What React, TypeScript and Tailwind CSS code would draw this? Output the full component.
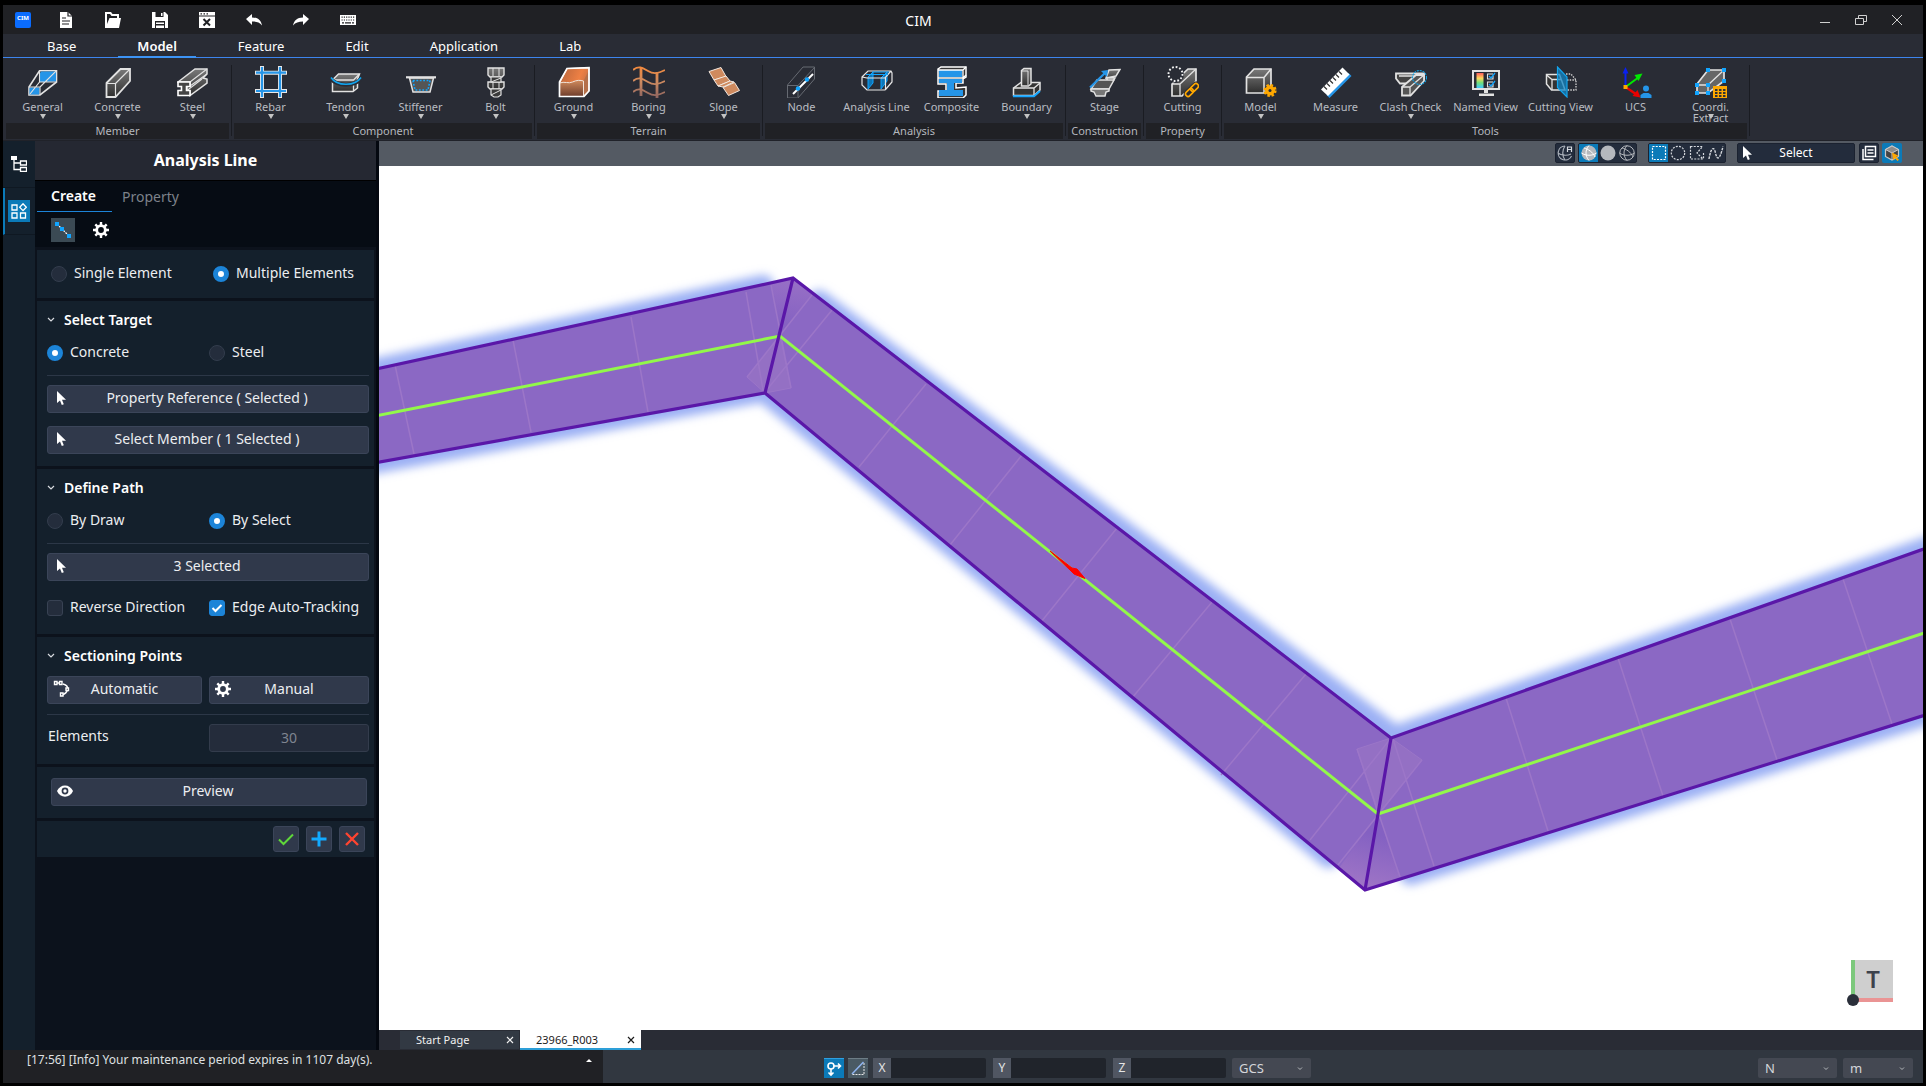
import type { ReactNode } from 'react'
import clsx from 'clsx'

/* ---------- ribbon icons, all on a 32px grid ---------- */

const DARK = 'url(#steel)'
const EDGE = '#e2e2e2'

function Icon32({ children }: { children: ReactNode }) {
  return (
    <svg viewBox="0 0 32 32" className="size-8" fill="none" strokeLinejoin="miter" aria-hidden="true">
      {children}
    </svg>
  )
}

// Gradients shared by every ribbon icon.
function SharedDefs() {
  return (
    <svg className="absolute size-0" aria-hidden="true">
      <defs>
        <linearGradient id="steel" x1="0" y1="0" x2="0" y2="1">
          <stop offset="0" stopColor="#7a7a7a" />
          <stop offset="1" stopColor="#2e2e2e" />
        </linearGradient>
        <linearGradient id="soilTop" x1="0" y1="0" x2="1" y2="0.4">
          <stop offset="0" stopColor="#b5643c" />
          <stop offset="0.7" stopColor="#ee8044" />
          <stop offset="1" stopColor="#c97246" />
        </linearGradient>
        <linearGradient id="soilFront" x1="0" y1="0" x2="0" y2="1">
          <stop offset="0" stopColor="#d08a5c" />
          <stop offset="1" stopColor="#6e3d2c" />
        </linearGradient>
        <linearGradient id="boring" x1="0" y1="0" x2="0" y2="32" gradientUnits="userSpaceOnUse">
          <stop offset="0" stopColor="#f58a3c" />
          <stop offset="0.5" stopColor="#cc8a60" />
          <stop offset="1" stopColor="#8d6460" />
        </linearGradient>
        <linearGradient id="rainbow" x1="0" y1="0" x2="0" y2="1">
          <stop offset="0" stopColor="#ff5a5a" />
          <stop offset="0.35" stopColor="#ffd95a" />
          <stop offset="0.65" stopColor="#6fe07a" />
          <stop offset="1" stopColor="#3cc8ff" />
        </linearGradient>
      </defs>
    </svg>
  )
}

const icons = {
  general: (
    <Icon32>
      <path d="M2 21 12.5 4.700H29.500V16L13 29H2z" stroke={EDGE} strokeWidth="1.6" />
      <path d="M14 5.500h15V15.500L17 16h-4.500V8z" fill="#2595e8" />
      <path d="M2.500 21.500h10v7h-10z" fill="#2595e8" />
      <path d="M2 21h11v8M13 21 29.500 4.700M12.500 5v11L3 28M12.500 16H29" stroke={EDGE} strokeWidth="1.100" />
    </Icon32>
  ),
  concrete: (
    <Icon32>
      <path d="M4.500 17 18.500 3H28v12L13.500 31h-9z" fill={DARK} stroke={EDGE} strokeWidth="1.800" />
      <path d="M5 17.500h8.500V30.500M13.500 17.500 28 3" stroke={EDGE} strokeWidth="1.200" />
    </Icon32>
  ),
  steel: (
    <Icon32>
      <path d="M1 16 18 3h12v5l-4 4 4 1v4L13 29.500V25l-3-.5v-4l3-.5v-4z" fill={DARK} stroke={EDGE} strokeWidth="1.500" />
      <path d="M13 20 30 8M10 24.500 25 13M13 16 30 3" stroke={EDGE} strokeWidth="1.100" />
      <path d="M1 16h12v4.500H9.500v4H13v5H1v-5h3.500v-4H1z" fill="#444" stroke="#fff" strokeWidth="1.600" />
    </Icon32>
  ),
  rebar: (
    <Icon32>
      <path d="M0 6.700h32M0 25h32M7 0v32M25 0v32" stroke="#e8e8e8" strokeWidth="4" />
      <path d="M1 6.700h30M1 25h30M7 1v30M25 1v30" stroke="#2595e8" strokeWidth="2.200" />
    </Icon32>
  ),
  tendon: (
    <Icon32>
      <path d="M2.500 14 8.500 8H29.500L27.500 13v9L23 25.500H2.500z" fill={DARK} stroke={EDGE} strokeWidth="1.500" />
      <path d="M2.500 14H23.500L29.500 8M23.500 17v8" stroke={EDGE} strokeWidth="1.300" />
      <path d="M0 11.500C6 21 26 21 32 11.500" stroke="#292c35" strokeWidth="4" />
      <path d="M1 11.500C7 20.500 25 20.500 31 11.500" stroke="#12a5ee" strokeWidth="1.600" />
    </Icon32>
  ),
  stiffener: (
    <Icon32>
      <path d="M4.500 12h24L25 26H8z" fill="#555" stroke={EDGE} strokeWidth="1.500" />
      <path d="M1 11.300h30" stroke={EDGE} strokeWidth="2.200" />
      <path d="M8 14.500h17L23 24H10z" stroke="#12a5ff" strokeWidth="1.600" strokeDasharray="1.800 1.600" />
    </Icon32>
  ),
  bolt: (
    <Icon32>
      <path d="M8 2h16v7l-2 2H10L8 9zM8 16h16v5l-2 2H10l-2-2z" fill={DARK} stroke={EDGE} strokeWidth="1.400" />
      <path d="M11 11h10v5H11zM11 23h10v6l-3 2h-4l-3-2z" fill="#3a3a3a" stroke={EDGE} strokeWidth="1.200" />
      <path d="M13 2v8M19 2v8M13 16v7M19 16v7M11 16l10-4M11 29l10-5" stroke={EDGE} strokeWidth="1" />
    </Icon32>
  ),
  ground: (
    <Icon32>
      <path d="M1.500 15 9 2.500 31 1.500V25L26 30.500H1.500z" fill="url(#soilTop)" />
      <path d="M1.500 17c5-2 9 1 13-1s8-2 11-1v15.500h-24z" fill="url(#soilFront)" />
      <path d="M25.500 15 31 4v21l-5.500 5z" fill="#b5704a" />
      <path d="M1.500 17c5-2 9 1 13-1s8-2 11-1v15L31 25V1.700L9 2.500 1.500 17v13.500H26" stroke="#f1e4da" strokeWidth="1" />
      <path d="M1.500 16 9 2.500 31 1.700V25L26 30.500H1.500z" stroke="#fff" strokeWidth="1.700" />
    </Icon32>
  ),
  boring: (
    <Icon32>
      <path d="M8 1v29M24 6v26" stroke="url(#boring)" strokeWidth="2.800" />
      <path
        d="M0 4C6-1 10 2 15 5s9 3 17-1M0 15c6-5 10-2 15 1s9 3 17-1M0 26c6-5 10-2 15 1s9 3 17-1"
        stroke="url(#boring)"
        strokeWidth="1.900"
      />
    </Icon32>
  ),
  slope: (
    <Icon32>
      <path d="M1 5.500 13 1.500l5 9L6 14z" fill="#cf8a5e" stroke="#f3e8df" />
      <path d="M6 14 18 10l4 5-12 5z" fill="#cf8a5e" stroke="#f3e8df" />
      <path d="M10 20 22 15l4 1-11 5z" fill="#cf8a5e" stroke="#f3e8df" />
      <path d="M15 21.500 26.500 16.500l5 8-11 5z" fill="#cf8a5e" stroke="#f3e8df" />
    </Icon32>
  ),
  node: (
    <Icon32>
      <path d="M1.500 19 17 1h11.500v12L12 32H1.500zM1.500 19.500h10.500V31M12 19.500 28.500 1.500" stroke="#666a72" />
      <path d="M7 28 27 8" stroke="#fff" strokeWidth="2" />
      <circle cx="12" cy="22.500" r="2.200" fill="#12a5ff" />
      <circle cx="21" cy="13.500" r="2.200" fill="#12a5ff" />
    </Icon32>
  ),
  analysisLine: (
    <Icon32>
      <path d="m7 11 5-5v11l-5 6zM20 12l6-6v9l-6 8z" fill="#0d76b8" stroke="#12a5ff" />
      <path d="M1 11 7 5h23l1 2v9l-6 7-1 1H6l-5-5zM1 11l5 1h18l6-7M24.500 12v11" stroke="#e8e8e8" strokeWidth="1.200" />
      <path d="M5 8.500h22M11 6h17" stroke="#12a5ff" strokeWidth="1.200" />
    </Icon32>
  ),
  composite: (
    <Icon32>
      <path d="M2 3 5 1h25v10l-3 2v4h-7v5l10-1v8l-3 3H2v-7h8v-7H2z" fill="#333" stroke="#fff" strokeWidth="1.500" />
      <path d="M3 4h23v7H3zM3 13h23v4h-8v7h9v6H3v-6h8v-7H3z" fill="#2595e8" />
      <path d="M2 12h25V4H2M27 12l3-3M27 4l3-3" stroke="#fff" strokeWidth="1.300" />
    </Icon32>
  ),
  boundary: (
    <Icon32>
      <path d="M2.500 22 10 16.500h19V24L23 29.500H2.500z" fill="#333" stroke={EDGE} strokeWidth="1.500" />
      <path d="M2.500 22H23l6-5M23 22v7" stroke={EDGE} strokeWidth="1.300" />
      <path d="M10.500 4.500 13 2.500h7V18l-2.500 2h-7z" fill={DARK} stroke={EDGE} strokeWidth="1.500" />
      <path d="M10.500 5h6.500v14" stroke={EDGE} />
      <path d="M2 30.300h21l6-5.300" stroke="#12a5ff" strokeWidth="2" />
    </Icon32>
  ),
  stage: (
    <Icon32>
      <path d="m20 4 11-.5-4 6.500-10 2zM18 12h8l-2 3h-6z" fill={DARK} stroke={EDGE} strokeWidth="1.500" />
      <path d="M8 14h17l-5 9H2z" fill="#555" stroke={EDGE} strokeWidth="1.500" />
      <path d="M2 23h18v2l-3 1-1 4H7l-2-4-3-1z" fill="#777" stroke={EDGE} strokeWidth="1.500" />
      <path d="M1 21.500 16 7" stroke="#2595e8" strokeWidth="2.200" />
      <path d="m12 5 7-1-1 7z" fill="#2595e8" />
    </Icon32>
  ),
  cutting: (
    <Icon32>
      <path d="M5 18 21 3h8v12L15 30H5z" fill={DARK} stroke={EDGE} strokeWidth="1.700" />
      <path d="M5 18h8v12M13 18 29 3" stroke={EDGE} strokeWidth="1.300" />
      <circle cx="8.500" cy="8.500" r="8.500" fill="#292c35" />
      <circle cx="8.500" cy="8" r="7" stroke="#f2f2f2" strokeWidth="1.900" strokeDasharray="1.800 1.860" />
      <g stroke="#292c35" strokeWidth="4">
        <rect x="18" y="24" width="9" height="5" rx="2.500" transform="rotate(-45 22.500 26.500)" />
        <rect x="23" y="19" width="9" height="5" rx="2.500" transform="rotate(-45 27.500 21.500)" />
      </g>
      <g stroke="#ffa800" strokeWidth="1.600">
        <rect x="18" y="24" width="9" height="5" rx="2.500" transform="rotate(-45 22.500 26.500)" />
        <rect x="23" y="19" width="9" height="5" rx="2.500" transform="rotate(-45 27.500 21.500)" />
      </g>
    </Icon32>
  ),
  model: (
    <Icon32>
      <path d="M1.500 11 9 3h17v16l-6 8H1.500z" fill={DARK} stroke={EDGE} strokeWidth="1.700" />
      <path d="M1.500 11.500h17.500V27M19 11.500 26 3" stroke={EDGE} strokeWidth="1.500" />
      <circle cx="25" cy="24.500" r="5" fill="#ffa800" />
      <circle cx="25" cy="24.500" r="5.300" stroke="#ffa800" strokeWidth="2.600" strokeDasharray="2.400 1.760" />
      <circle cx="25" cy="24.500" r="1.500" fill="#292c35" />
    </Icon32>
  ),
  measure: (
    <Icon32>
      <path d="m9.500 32 22-22-3-3-22 22z" fill="#2595e8" />
      <path d="M1 23.500 22.500 1.500l7 7L8 30z" fill="#fff" />
      <path
        d="m4 20.500 3 3M7 17.500l3 3M10 14.500l3 3M13 11.500l3 3M16 8.500l3 3M19 5.500l3 3"
        stroke="#333"
        strokeWidth="1.200"
      />
    </Icon32>
  ),
  clash: (
    <Icon32>
      <path d="M1 7.500h28v6l-4 4H5l-4-5z" fill="#444" stroke={EDGE} strokeWidth="1.800" />
      <path d="M7 21 21 9h8v6L15.500 29.500H7z" fill="#555" stroke={EDGE} strokeWidth="1.800" />
      <path d="M7 21h8v8M15 21l14-12M4 10h16" stroke={EDGE} strokeWidth="1.300" />
      <circle cx="24.500" cy="11.500" r="7" stroke="#129fe0" strokeDasharray="2 1" strokeWidth="1.200" />
    </Icon32>
  ),
  namedView: (
    <Icon32>
      <rect x="3" y="5" width="26" height="18" stroke={EDGE} strokeWidth="2" />
      <path d="M14 24h4v3h-4zM9 27.500h15v2.500H9z" fill={EDGE} />
      <rect x="6.500" y="7" width="7" height="15" fill="url(#rainbow)" />
      <path d="M23 8h-5.500v5H23v-3M23 16h-5.500v5H23v-3" stroke={EDGE} strokeWidth="1.100" />
      <path d="m19 10 2 2 4-5M19 18l2 2 4-5" stroke="#12a5ff" strokeWidth="1.300" />
    </Icon32>
  ),
  cuttingView: (
    <Icon32>
      <path d="M1.500 8.500h13L20 24H6.500l-5-6z" fill="#333" stroke={EDGE} strokeWidth="1.500" />
      <path d="M1.500 9 7 13.500h9M7 13.500V24" stroke={EDGE} strokeWidth="1.300" />
      <path d="M21 8h5l5 6v10h-9M22 14h9" stroke="#d0d0d0" strokeWidth="1.300" strokeDasharray="1.500 1.200" />
      <path d="M12.500 1v20.500L22 31V11z" fill="#1385c4" fillOpacity=".75" stroke="#12a5ee" strokeWidth="1.200" />
    </Icon32>
  ),
  ucs: (
    <Icon32>
      <path d="M5.500 21V5" stroke="#0a20f0" strokeWidth="2" />
      <path d="M2.500 7.500 5.500 1l3 6.500z" fill="#0a20f0" />
      <path d="M5.500 21 19 11" stroke="#00e800" strokeWidth="2" />
      <path d="m14.500 9 8-1.500-4 7.500z" fill="#00e800" />
      <path d="m5.500 21 11 7.500" stroke="#e80000" strokeWidth="2.400" />
      <path d="m12.500 30 8 1.500-3-7.500z" fill="#e80000" />
      <path d="M3.500 19h4v4h-4z" fill="#ffa800" />
      <circle cx="26" cy="22.500" r="3" fill="#2595e8" />
      <path d="M20.500 32v-3l3-2h5l3 2v3z" fill="#2595e8" />
    </Icon32>
  ),
  coordi: (
    <Icon32>
      <path d="M2 18 13 4h16v11L13 27H2z" fill="#666" stroke={EDGE} strokeWidth="1.700" />
      <path d="M2 19h11v8M13 19 29 4" stroke={EDGE} strokeWidth="1.300" />
      <path
        d="M11 2h4v4h-4zM27 2h4v4h-4zM27 13h4v4h-4zM0 17h4v4H0zM11 17h4v4h-4zM0 25h4v4H0zM11 25h4v4h-4z"
        fill="#12a5ff"
      />
      <path d="M18 20h14v12H18z" fill="#ffa800" />
      <path
        d="M20 23h2.500v2H20zM24 23h2.500v2H24zM28 23h2.500v2H28zM20 26h2.500v2H20zM24 26h2.500v2H24zM28 26h2.500v2H28zM20 29h2.500v2H20zM24 29h2.500v2H24zM28 29h2.500v2H28z"
        fill="#333"
      />
    </Icon32>
  ),
}

type Tool = { label: string; icon: ReactNode; menu?: boolean }

const groups: { name: string; tools: Tool[] }[] = [
  {
    name: 'Member',
    tools: [
      { label: 'General', icon: icons.general, menu: true },
      { label: 'Concrete', icon: icons.concrete, menu: true },
      { label: 'Steel', icon: icons.steel, menu: true },
    ],
  },
  {
    name: 'Component',
    tools: [
      { label: 'Rebar', icon: icons.rebar, menu: true },
      { label: 'Tendon', icon: icons.tendon, menu: true },
      { label: 'Stiffener', icon: icons.stiffener, menu: true },
      { label: 'Bolt', icon: icons.bolt, menu: true },
    ],
  },
  {
    name: 'Terrain',
    tools: [
      { label: 'Ground', icon: icons.ground, menu: true },
      { label: 'Boring', icon: icons.boring, menu: true },
      { label: 'Slope', icon: icons.slope, menu: true },
    ],
  },
  {
    name: 'Analysis',
    tools: [
      { label: 'Node', icon: icons.node },
      { label: 'Analysis Line', icon: icons.analysisLine },
      { label: 'Composite', icon: icons.composite },
      { label: 'Boundary', icon: icons.boundary, menu: true },
    ],
  },
  { name: 'Construction', tools: [{ label: 'Stage', icon: icons.stage }] },
  { name: 'Property', tools: [{ label: 'Cutting', icon: icons.cutting }] },
  {
    name: 'Tools',
    tools: [
      { label: 'Model', icon: icons.model, menu: true },
      { label: 'Measure', icon: icons.measure },
      { label: 'Clash Check', icon: icons.clash, menu: true },
      { label: 'Named View', icon: icons.namedView },
      { label: 'Cutting View', icon: icons.cuttingView },
      { label: 'UCS', icon: icons.ucs },
      { label: 'Coordi. Extract', icon: icons.coordi, menu: true },
    ],
  },
]

/* ---------- title bar ---------- */

const quickActions: { label: string; icon: ReactNode }[] = [
  {
    label: 'New',
    icon: (
      <>
        <path d="M2 0h8l4 4v12H2z" fill="#fff" />
        <path d="M10 0v4h4M4 6h4M4 9h8M4 12h7" stroke="#202125" strokeWidth="1.200" fill="none" />
      </>
    ),
  },
  {
    label: 'Open',
    icon: <path d="M0 0h6l1.500 2H14v4h2l-2 10H0zM2 3v9l2.500-6H12V4H6.500L5 2H2z" fill="#fff" fillRule="evenodd" />,
  },
  {
    label: 'Save',
    icon: (
      <>
        <path d="M0 0h13l3 3v13H0z" fill="#fff" />
        <path d="M3.500 0h8v5h-8zM3 9h10v7H3z" fill="#202125" />
        <path d="M9 1h1.500v3H9zM4 10.500h8V12H4zM4 13.500h8V16H4z" fill="#fff" />
      </>
    ),
  },
  {
    label: 'Close project',
    icon: (
      <>
        <path d="M0 0h16v3.500H0zM0 4.500h16V16H0z" fill="#fff" />
        <path d="M1.500 1.200H3v1.300H1.500zM4.500 1.200H6v1.300H4.500zM7.500 1.200H9v1.300H7.500z" fill="#202125" />
        <path d="m4.500 7 6.500 6.500M11 7l-6.500 6.500" stroke="#202125" strokeWidth="2" />
      </>
    ),
  },
  { label: 'Undo', icon: <path d="M0 7 6 2v3.500c6 0 9 3 10 8-2.500-3-5.500-4-10-4V13z" fill="#fff" /> },
  { label: 'Redo', icon: <path d="m16 7-6-5v3.500c-6 0-9 3-10 8 2.500-3 5.500-4 10-4V13z" fill="#fff" /> },
  {
    label: 'Keyboard',
    icon: (
      <>
        <path d="M0 3h16v10H0z" fill="#fff" />
        <path d="M1.500 5.200h13M1.500 8h13" stroke="#202125" strokeWidth="1.200" strokeDasharray="1.200 1.100" />
        <path d="M2 10.800h2M5 10.800h6M12 10.800h2" stroke="#202125" strokeWidth="1.200" />
      </>
    ),
  },
]

function TitleBar() {
  return (
    <header className="relative flex h-[29px] shrink-0 items-center bg-[#202125] pl-3">
      <span className="flex h-4 w-4 items-start justify-center rounded-[2px] bg-[#0a6cff] pt-[3px] text-[6px] leading-[6px] font-bold text-white">
        CIM
      </span>
      <div className="ml-[27px] flex gap-[31px]">
        {quickActions.map((a) => (
          <button key={a.label} type="button" aria-label={a.label} className="size-4">
            <svg viewBox="0 0 16 16" className="size-4">
              {a.icon}
            </svg>
          </button>
        ))}
      </div>
      <h1 className="pointer-events-none absolute inset-0 flex items-center justify-center pt-[2px] pr-[89px] text-sm text-white">
        CIM
      </h1>
      <div className="ml-auto flex gap-6 pr-5 text-[#d0d0d0]">
        <button type="button" aria-label="Minimize">
          <svg viewBox="0 0 12 12" className="size-3" stroke="currentColor">
            <path d="M1 8.500h10" />
          </svg>
        </button>
        <button type="button" aria-label="Restore">
          <svg viewBox="0 0 12 12" className="size-3" stroke="currentColor" fill="none">
            <path d="M.5 4.500h8v6h-8zM3.500 4.500v-3h8v6h-3" />
          </svg>
        </button>
        <button type="button" aria-label="Close">
          <svg viewBox="0 0 12 12" className="size-3" stroke="currentColor">
            <path d="m1 1 10 10M11 1 1 11" />
          </svg>
        </button>
      </div>
    </header>
  )
}

function MenuTabs() {
  return (
    <nav className="flex h-6 shrink-0 gap-[23px] border-b border-[#3d85ee] bg-[#292c35] pl-[25px] text-[13px] text-white">
      {['Base', 'Model', 'Feature', 'Edit', 'Application', 'Lab'].map((t) => (
        <button
          key={t}
          type="button"
          className={clsx(
            'h-6 border-b-2 px-[19px] pt-[2px] leading-5',
            t === 'Model' ? 'border-[#3d94f5] font-semibold' : 'border-transparent',
          )}
        >
          {t}
        </button>
      ))}
    </nav>
  )
}

function Ribbon() {
  return (
    <div className="flex h-[83px] shrink-0 border-b border-[#202229] bg-[#292c35] pl-[2px]">
      {groups.map((g) => (
        <section key={g.name} aria-label={g.name} className="flex">
          <div className="flex flex-col px-px">
            <div className="-mx-px flex h-[65px]">
              {g.tools.map((t) => (
                <button key={t.label} type="button" className="relative flex w-[75px] flex-col items-center pt-2">
                  {t.icon}
                  <span
                    className={clsx(
                      'mt-[3px] text-[11px] leading-[11px] text-[#b9bcc2]',
                      t.label === 'Coordi. Extract' ? 'w-10' : 'whitespace-nowrap',
                    )}
                  >
                    {t.label}
                  </span>
                  {t.menu && (
                    <svg viewBox="0 0 6 5" className="absolute bottom-1 left-1/2 h-[5px] w-[6px] -translate-x-1/2">
                      <path d="M0 0h6L3 5z" fill="#c4c4c4" />
                    </svg>
                  )}
                </button>
              ))}
            </div>
            <h2 className="h-4 bg-[#202125] text-center text-[11px] leading-4 text-[#b4b7bd]">{g.name}</h2>
          </div>
          <div className="mx-px mt-[7px] h-[71px] w-px bg-[#1a1c22]" />
        </section>
      ))}
    </div>
  )
}

/* ---------- side panel ---------- */

function Cursor({ className = 'size-4' }: { className?: string }) {
  return (
    <svg viewBox="0 0 16 16" className={className} aria-hidden="true">
      <path d="M4 1v12l3-2.500L8.800 15l2-.8L9 9.800h4z" fill="#fff" />
    </svg>
  )
}

function Gear({ className }: { className: string }) {
  return (
    <svg viewBox="0 0 16 16" className={className} fill="none" aria-hidden="true">
      <circle cx="8" cy="8" r="4.300" stroke="#fff" strokeWidth="2.800" />
      <path d="M8 0v3M8 13v3M0 8h3M13 8h3M2.300 2.300l2 2M11.700 11.700l2 2M2.300 13.700l2-2M11.700 4.300l2-2" stroke="#fff" strokeWidth="2.400" />
    </svg>
  )
}

function Choice({ name, label, checked }: { name: string; label: string; checked?: boolean }) {
  return (
    <label className="flex h-4 items-center gap-[7px] leading-4 whitespace-nowrap">
      <input
        type="radio"
        name={name}
        defaultChecked={checked}
        className="size-4 shrink-0 appearance-none rounded-full border border-[#333d4d] bg-[#242d3c] checked:border-[5px] checked:border-[#1c84d8] checked:bg-white"
      />
      <span className="pb-[2px]">{label}</span>
    </label>
  )
}

function Check({ label, checked }: { label: string; checked?: boolean }) {
  return (
    <label className="relative flex h-4 items-center gap-[7px] leading-4 whitespace-nowrap">
      <input
        type="checkbox"
        defaultChecked={checked}
        className="peer size-4 shrink-0 appearance-none rounded-[3px] border border-[#384253] bg-[#242d3c] checked:border-[#1c84d8] checked:bg-[#1c84d8]"
      />
      <svg viewBox="0 0 16 16" className="absolute left-0 hidden size-4 peer-checked:block" fill="none">
        <path d="m3.500 8 3 3 6-6" stroke="#fff" strokeWidth="2" />
      </svg>
      <span className="pb-[2px]">{label}</span>
    </label>
  )
}

function PanelButton({ icon, half, children }: { icon: ReactNode; half?: boolean; children: ReactNode }) {
  return (
    <button
      type="button"
      className={clsx(
        'relative flex h-7 w-full items-center justify-center rounded-[3px] border border-[#3b4559] bg-[#30394b] pb-[2px]',
        !half && 'pr-[2px]',
      )}
    >
      <span className="absolute left-[5px]">{icon}</span>
      {children}
    </button>
  )
}

function Heading({ children }: { children: ReactNode }) {
  return (
    <h3 className="flex h-[18px] items-center gap-[9px] leading-[18px] font-semibold text-white">
      <svg viewBox="0 0 8 6" className="h-[6px] w-2" fill="none">
        <path d="m1 1 3 3 3-3" stroke="#d8dbe0" strokeWidth="1.200" />
      </svg>
      {children}
    </h3>
  )
}

function Rule({ className }: { className: string }) {
  return <hr className={clsx('border-t border-[#2c3747]', className)} />
}

const SECTION = 'bg-[#14202c] pr-[5px] pl-[10px]'
const PAIR = 'grid grid-cols-[162px_1fr]'

function SidePanel() {
  return (
    <aside className="flex w-[344px] shrink-0 flex-col border-r-[3px] border-[#040810] bg-[#0c121c] text-sm text-[#eceef1]">
      <h2 className="flex h-10 shrink-0 items-center justify-center border-b border-black bg-[#252832] pb-[2px] text-base font-bold text-white">
        Analysis Line
      </h2>
      <div className="h-[66px] shrink-0 bg-[#060c14] pl-[2px]">
        <div className="flex h-[31px]">
          <button type="button" className="w-[75px] border-b border-[#1c84d8] pr-[2px] font-semibold text-white">
            Create
          </button>
          <button type="button" className="ml-[10px] text-[#7d828a]">
            Property
          </button>
        </div>
        <div className="mt-[6px] ml-[14px] flex items-center gap-[18px]">
          <button type="button" aria-label="Analysis line" className="size-6 bg-[#3b4a54]">
            <svg viewBox="0 0 24 24" className="size-6">
              <path d="m6 6 12 12" stroke="#fff" strokeWidth="1.200" strokeDasharray="2 1" />
              <path d="M4 4h4v4H4zM9 9h4v4H9zM16 16h4v4h-4z" fill="#12a5ff" />
            </svg>
          </button>
          <button type="button" aria-label="Settings">
            <Gear className="size-4" />
          </button>
        </div>
      </div>

      <div className="mt-[3px] mr-[2px] ml-[2px] flex flex-col gap-[3px]">
        <div className="bg-[#14202c] pt-4 pb-4 pl-[14px]">
          <div className={PAIR}>
            <Choice name="element" label="Single Element" />
            <Choice name="element" label="Multiple Elements" checked />
          </div>
        </div>

        <div className={clsx(SECTION, 'pt-[10px] pb-3')}>
          <Heading>Select Target</Heading>
          <div className={clsx(PAIR, 'mt-4')}>
            <Choice name="target" label="Concrete" checked />
            <Choice name="target" label="Steel" />
          </div>
          <Rule className="mt-[14px] mb-[9px]" />
          <PanelButton icon={<Cursor />}>Property Reference ( Selected )</PanelButton>
          <div className="mt-[13px]">
            <PanelButton icon={<Cursor />}>Select Member ( 1 Selected )</PanelButton>
          </div>
        </div>

        <div className={clsx(SECTION, 'pt-[10px] pb-[18px]')}>
          <Heading>Define Path</Heading>
          <div className={clsx(PAIR, 'mt-4')}>
            <Choice name="path" label="By Draw" />
            <Choice name="path" label="By Select" checked />
          </div>
          <Rule className="mt-[14px] mb-[9px]" />
          <PanelButton icon={<Cursor />}>3 Selected</PanelButton>
          <div className={clsx(PAIR, 'mt-[19px]')}>
            <Check label="Reverse Direction" />
            <Check label="Edge Auto-Tracking" checked />
          </div>
        </div>

        <div className={clsx(SECTION, 'pt-[10px] pb-3')}>
          <Heading>Sectioning Points</Heading>
          <div className="mt-[11px] grid grid-cols-[155px_1fr] gap-[7px]">
            <PanelButton
              half
              icon={
                <svg viewBox="0 0 18 18" className="size-[18px]" fill="none" stroke="#fff" strokeWidth="1.400">
                  <path d="M3 3h4M10 4c4 1 5 3 4.500 5.500S12 14 9 15" />
                  <path d="M1.500 1.500h2.500v3H1.500zM6.500 1.500H9v3H6.500zM13 8h2.500v2.500H13zM7.500 13H10v3H7.500z" fill="#30394b" />
                </svg>
              }
            >
              Automatic
            </PanelButton>
            <PanelButton half icon={<Gear className="size-4" />}>
              Manual
            </PanelButton>
          </div>
          <Rule className="mt-[10px] mb-[9px]" />
          <div className={PAIR}>
            <label htmlFor="elements" className="pt-[2px] pl-px">
              Elements
            </label>
            <input
              id="elements"
              defaultValue="30"
              disabled
              className="h-7 w-full rounded-[3px] border border-[#333c4c] bg-[#242c3b] pb-[2px] text-center text-[#7f8590]"
            />
          </div>
        </div>

        <div className="bg-[#14202c] pt-[11px] pr-[7px] pb-3 pl-[14px]">
          <PanelButton
            icon={
              <svg viewBox="0 0 16 16" className="size-4">
                <path d="M0 8c3-7.500 13-7.500 16 0-3 7.500-13 7.500-16 0z" fill="#fff" />
                <circle cx="8" cy="8" r="3.400" fill="#30394b" />
                <circle cx="8" cy="8" r="1.700" fill="#fff" />
              </svg>
            }
          >
            Preview
          </PanelButton>
        </div>

        <div className="flex justify-end gap-[7px] bg-[#14202c] pt-[5px] pr-[9px] pb-[5px]">
          {[
            { label: 'OK', d: 'M2 9.500 6.500 14 16 4.500', stroke: '#5fd83a', w: '2' },
            { label: 'Apply', d: 'M9 1.500v15M1.500 9h15', stroke: '#12aaff', w: '3' },
            { label: 'Cancel', d: 'm3 3 12 12M15 3 3 15', stroke: '#ff4430', w: '2.400' },
          ].map((b) => (
            <button
              key={b.label}
              type="button"
              aria-label={b.label}
              className="flex size-[26px] items-center justify-center rounded-[3px] border border-[#3b4559] bg-[#30394b]"
            >
              <svg viewBox="0 0 18 18" className="size-[18px]" fill="none" stroke={b.stroke} strokeWidth={b.w}>
                <path d={b.d} />
              </svg>
            </button>
          ))}
        </div>
      </div>
    </aside>
  )
}

function Rail() {
  return (
    <div className="w-8 shrink-0 bg-[#14202c]">
      <button
        type="button"
        aria-label="Works tree"
        className="flex h-[47px] w-full items-center justify-center border-b border-[#0f1822]"
      >
        <svg viewBox="0 0 16 16" className="size-4" fill="none" stroke="#fff" strokeWidth="1.300">
          <path d="M0 0h6v4H0z" fill="#fff" stroke="none" />
          <path d="M3 4v9.500h6M3 7h6M9.500 5h6v4h-6zM9.500 11.500h6v4h-6z" />
        </svg>
      </button>
      <button
        type="button"
        aria-label="Properties"
        className="flex h-[47px] w-full items-center border-b border-l-2 border-b-[#0f1822] border-l-[#0b7ab8] pl-[3px]"
      >
        <span className="flex size-[22px] items-center justify-center bg-[#0b7ab8]">
          <svg viewBox="0 0 16 16" className="size-4" fill="none" stroke="#fff" strokeWidth="1.300">
            <path d="M1 2h5v5H1zM1 10h5v5H1zM9.500 10h5v5h-5zM12 .8 15.300 4.200 12 7.600 8.700 4.200z" />
          </svg>
        </span>
      </button>
    </div>
  )
}

/* ---------- viewport ---------- */

function Segments({ items, active }: { items: { label: string; icon: ReactNode }[]; active?: string }) {
  return (
    <div className="flex overflow-hidden rounded-[2px] border border-[#1b2230] bg-[#232c3c]">
      {items.map((i) => (
        <button
          key={i.label}
          type="button"
          aria-label={i.label}
          className={clsx(
            'flex h-[18px] items-center justify-center',
            items.length > 1 ? 'w-[19px]' : 'w-[18px]',
            i.label === active && 'bg-[#0b7ab8]',
          )}
        >
          <svg viewBox="0 0 16 16" className="size-4" fill="none">
            {i.icon}
          </svg>
        </button>
      ))}
    </div>
  )
}

function ViewToolbar() {
  return (
    <div className="flex h-[25px] shrink-0 items-center justify-end bg-[#545a63] pr-[21px] pb-px">
      <Segments
        items={[
          {
            label: 'Auto view',
            icon: (
              <g stroke="#a9afb8" strokeWidth="1.200">
                <path d="M8 1A7 7 0 1 0 14.500 11M8 1C5 5 5 11 8 15M1 8c3 2.500 9 3 13 1" />
                <path d="M10.500 7V2h4v5M10.500 4.500h4" stroke="#d6d9de" />
              </g>
            ),
          },
        ]}
      />
      <div className="ml-[3px]">
        <Segments
          active="Shaded with edges"
          items={[
            {
              label: 'Shaded with edges',
              icon: (
                <>
                  <circle cx="8" cy="8" r="7.500" fill="#b5b8bd" />
                  <path d="M8 .5C4 5 4 11 8 15.500M.5 8c4 3 11 3 15 0M3 3c4 1 9 4 11 9" stroke="#fff" />
                </>
              ),
            },
            { label: 'Shaded', icon: <circle cx="8" cy="8" r="7.500" fill="#b5b8bd" /> },
            {
              label: 'Wireframe',
              icon: (
                <>
                  <circle cx="8" cy="8" r="7.200" stroke="#b5b8bd" />
                  <path d="M8 .5C4 5 4 11 8 15.500M.5 8c4 3 11 3 15 0M3 3c4 1 9 4 11 9" stroke="#b5b8bd" />
                </>
              ),
            },
          ]}
        />
      </div>
      <div className="ml-[11px]">
        <Segments
          active="Rectangle select"
          items={[
            {
              label: 'Rectangle select',
              icon: <path d="M1.500 1.500h13v13h-13z" stroke="#fff" strokeWidth="1.200" strokeDasharray="2 1.250" />,
            },
            {
              label: 'Circle select',
              icon: <circle cx="8" cy="8" r="6.700" stroke="#d6d9de" strokeWidth="1.200" strokeDasharray="2 1.240" />,
            },
            {
              label: 'Polygon select',
              icon: (
                <path d="M1.500 1.500h12L8 8l6 6H1.500zM14.500 8v6" stroke="#d6d9de" strokeWidth="1.200" strokeDasharray="2 1.250" />
              ),
            },
            {
              label: 'Fence select',
              icon: <path d="M1 14C3 2 6 1 7.500 8s4 8 7.500-6.500" stroke="#d6d9de" strokeWidth="1.400" strokeDasharray="2.500 1" />,
            },
          ]}
        />
      </div>
      <button
        type="button"
        className="relative ml-[11px] h-5 w-[118px] rounded-[2px] border border-[#1b2230] bg-[#232c3c] text-xs leading-4 text-white"
      >
        <Cursor className="absolute top-px left-px size-4" />
        Select
      </button>
      <div className="ml-1">
        <Segments
          items={[
            {
              label: 'Work planes',
              icon: <path d="M4.500 1.500h10v10h-10zM2 4v10.500h10.500M6.500 5h6M6.500 8h6" stroke="#fff" strokeWidth="1.500" />,
            },
          ]}
        />
      </div>
      <button
        type="button"
        aria-label="Pick solid"
        className="ml-[3px] flex size-5 items-center justify-center rounded-[2px] bg-[#0b7ab8]"
      >
        <svg viewBox="0 0 16 16" className="size-4" fill="none">
          <path d="m8 1 6.500 3.500v7L8 15l-6.500-3.500v-7z" fill="#444" stroke="#c9c9c9" strokeWidth="1.200" />
          <path d="M1.500 4.500 8 8l6.500-3.500L8 1z" fill="#8d8d8d" stroke="#c9c9c9" />
          <path d="M8 8v7" stroke="#c9c9c9" />
          <path d="M8 7.500 15 11l-3 .8 3 3-1.500 1.200-2.700-3-1.500 2.500z" fill="#ffa800" />
        </svg>
      </button>
    </div>
  )
}

// World units equal viewport pixels at the default window size.
function Scene() {
  return (
    <svg
      viewBox="379 166 1544 864"
      preserveAspectRatio="xMidYMid slice"
      className="absolute inset-0 size-full"
      role="img"
      aria-label="Selected member with analysis line"
    >
      <defs>
        <filter id="glow" x="-10%" y="-10%" width="120%" height="120%">
          <feGaussianBlur stdDeviation="5" />
        </filter>
        <linearGradient id="fold" x1="1364" y1="890" x2="1378" y2="835" gradientUnits="userSpaceOnUse">
          <stop offset="0" stopColor="#a076c6" />
          <stop offset="1" stopColor="#8461c2" />
        </linearGradient>
        <linearGradient id="foldTop" x1="793" y1="278" x2="786" y2="325" gradientUnits="userSpaceOnUse">
          <stop offset="0" stopColor="#9870c6" />
          <stop offset="1" stopColor="#8562c2" />
        </linearGradient>
      </defs>
      <g filter="url(#glow)" fill="#9bb0f4" stroke="#9bb0f4" strokeWidth="22" strokeLinejoin="round">
        <path d="M340 377 763 286l18 102-441 81z" />
        <path d="M819 301 754 383l575 474 82-108z" />
        <path d="M1363 748 1410 874 1980 698V529z" />
      </g>
      <g fill="#8b68c4">
        <path d="M340 377 793 278 765 393 340 469z" />
        <path d="M793 278 1391 738 1365 890 765 393z" />
        <path d="M1391 738 1980 529V698L1365 890z" />
      </g>
      <path d="M793 278 771 284 780 336 812 294z" fill="url(#foldTop)" />
      <path d="M1365 890 1339 868 1378 814 1401 877z" fill="url(#fold)" />
      <g fill="#9470c4" stroke="#9b76c8">
        <path d="M780 336 747 377 765 393 791 388z" />
        <path d="M1391 738 1357 749 1378 814 1422 760z" />
      </g>
      <path
        fill="none"
        stroke="#9c76c8"
        strokeWidth="1.500"
        d="M746 292 763 390M771 285 791 388M395 365 414 454M513 340 531 432M631 317 648 412M812 295 747 377M832 310 765 392M926 384 859 467M1022 455 950 545M1117 528 1041 622M1212 602 1132 698M1306 674 1221 775M1391 738 1310 840M1422 760 1338 865M1393 739 1434 866M1357 749 1400 877M1506 698 1548 831M1618 658 1663 796M1730 619 1777 760M1843 579 1892 724"
      />
      <path
        d="M340 377 793 278 1391 738 1980 529M340 469 765 393 1365 890 1980 698"
        fill="none"
        stroke="#5a17a8"
        strokeWidth="3.200"
      />
      <path d="M340 423 780 336 1378 814 1980 614.500" fill="none" stroke="#92f84a" strokeWidth="3" />
      <path d="M793 278 765 393M1391 738 1365 890" stroke="#5a17a8" strokeWidth="3.200" />
      <path d="M1050 551 1072 568 1077 569 1085 578.500 1074 574 1070 570z" fill="#f00" stroke="#f00" />
    </svg>
  )
}

function ViewCube() {
  return (
    <div className="absolute right-[30px] bottom-[28px] flex h-[42px] w-[42px] items-center justify-center border-b-4 border-l-4 border-b-[#ea9494] border-l-[#7cc87c] bg-[#cfcfcf] pr-[2px] text-2xl leading-6 font-semibold text-[#3d424c]">
      T
      <span className="absolute -bottom-2 -left-2 size-3 rounded-full bg-[#2a2f3a]" />
    </div>
  )
}

function DocTabs() {
  return (
    <div className="flex h-5 shrink-0 bg-[#292c35] pl-[21px] text-[11px]">
      <div className="mt-px flex h-[18px] w-[119px] items-center justify-between bg-[#323943] pr-[5px] pl-4 text-[#f0f0f0]">
        <button type="button">Start Page</button>
        <CloseTab />
      </div>
      <div className="ml-px flex h-5 w-[121px] items-center justify-between border-b-2 border-[#2d9fd8] bg-white pt-[2px] pr-[6px] pl-4 text-[#1c1c1c]">
        <button type="button">23966_R003</button>
        <CloseTab />
      </div>
    </div>
  )
}

function CloseTab() {
  return (
    <button type="button" aria-label="Close tab">
      <svg viewBox="0 0 8 8" className="size-2" stroke="currentColor" strokeWidth="1.200">
        <path d="m1 1 6 6M7 1 1 7" />
      </svg>
    </button>
  )
}

/* ---------- status bar ---------- */

function Unit({ label, value, className }: { label: string; value: string; className: string }) {
  return (
    <div className={clsx('relative h-5', className)}>
      <select
        aria-label={label}
        className="block h-5 w-full appearance-none rounded-[2px] bg-[#444852] pl-[7px] text-[13px] leading-5 text-[#d4d6da]"
      >
        <option>{value}</option>
      </select>
      <svg viewBox="0 0 6 4" className="pointer-events-none absolute top-[9px] right-2 h-1 w-[6px]" fill="none">
        <path d="m1 .5 2 2 2-2" stroke="#b5b8bd" />
      </svg>
    </div>
  )
}

function StatusBar() {
  return (
    <footer className="flex h-[33px] shrink-0 bg-[#313740]">
      <div className="flex w-[600px] shrink-0 items-start justify-between bg-[#202125] pr-[11px] pl-6 text-xs leading-5 text-[#dfe0e2]">
        <p>[17:56] [Info] Your maintenance period expires in 1107 day(s).</p>
        <svg viewBox="0 0 6 3" className="mt-[9px] h-[3px] w-[6px]">
          <path d="M3 0 6 3H0z" fill="#fff" />
        </svg>
      </div>
      <div className="flex flex-1 items-start pt-2 pr-[10px] pl-[221px]">
        <button type="button" aria-label="Snap" className="size-5 border-t border-[#2fa0e0] bg-[#0b7ab8]">
          <svg viewBox="0 0 20 19" className="h-[19px] w-5" fill="none" stroke="#fff" strokeWidth="1.600">
            <circle cx="7" cy="7" r="3" />
            <path d="M7 10v6M4.500 13.500 7 16l2.500-2.500M10 7h6M14 4.500 16.500 7 14 9.500" />
          </svg>
        </button>
        <button type="button" aria-label="Ortho" className="ml-1 size-5 border-t border-[#6d7d86] bg-[#4a5a64]">
          <svg viewBox="0 0 20 19" className="h-[19px] w-5" fill="none">
            <path d="M4 15 15.500 3" stroke="#8fb4f0" strokeWidth="1.500" />
            <path d="M16 4v11.500H4" stroke="#e6e6e6" strokeDasharray="2 1" />
          </svg>
        </button>
        <div className="ml-[5px] flex gap-[7px]">
          {['X', 'Y', 'Z'].map((axis) => (
            <label key={axis} className="flex h-5 text-xs leading-5 text-[#e6e6e6]">
              <span className="w-[18px] bg-[#505662] text-center">{axis}</span>
              <input className="w-[95px] rounded-r-[2px] bg-[#20242b] px-1" />
            </label>
          ))}
        </div>
        <Unit label="Coordinate system" value="GCS" className="ml-[6px] w-[79px]" />
        <Unit label="Force unit" value="N" className="ml-auto w-[79px]" />
        <Unit label="Length unit" value="m" className="ml-[6px] w-[70px]" />
      </div>
    </footer>
  )
}

export default function App() {
  return (
    <div className="flex h-screen flex-col overflow-hidden border-x-[3px] border-t-[5px] border-b-[3px] border-black bg-[#292c35] font-['Noto_Sans',sans-serif]">
      <SharedDefs />
      <TitleBar />
      <MenuTabs />
      <Ribbon />
      <div className="flex min-h-0 flex-1">
        <Rail />
        <SidePanel />
        <main className="flex min-w-0 flex-1 flex-col">
          <ViewToolbar />
          <div className="relative min-h-0 flex-1 overflow-hidden bg-white">
            <Scene />
            <ViewCube />
          </div>
          <DocTabs />
        </main>
      </div>
      <StatusBar />
    </div>
  )
}
